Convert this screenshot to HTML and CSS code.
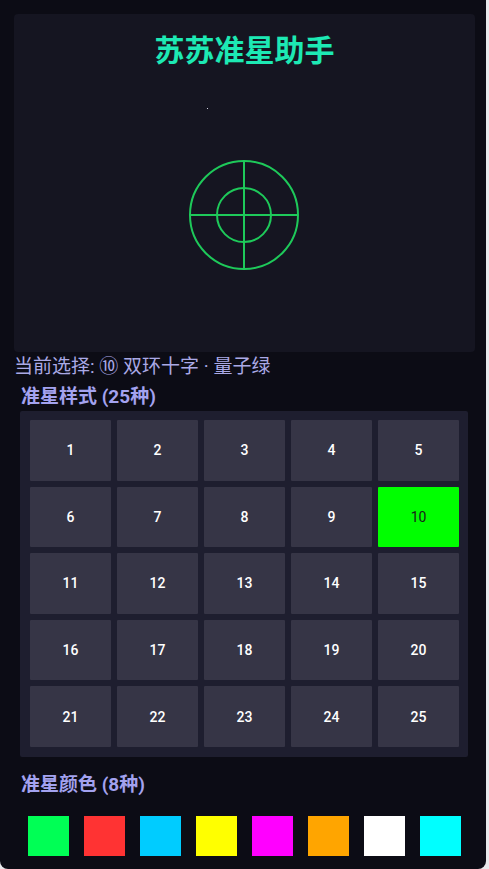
FILE: index.html
```html
<!DOCTYPE html>
<html lang="zh-CN">
<head>
<meta charset="utf-8">
<title>苏苏准星助手</title>
<link rel="stylesheet" href="styles.css">
</head>
<body>
<div class="app">
  <div class="preview">
    <h1 class="title">苏苏准星助手</h1>
    <span class="dot"></span>
    <div class="stage">
      <svg class="cross" width="112" height="112" viewBox="0 0 112 112">
        <g fill="none" stroke="#1ec95a" stroke-width="2">
          <circle cx="56" cy="56" r="54"/>
          <circle cx="56" cy="56" r="27"/>
          <line x1="2" y1="56" x2="110" y2="56"/>
          <line x1="56" y1="2" x2="56" y2="110"/>
        </g>
      </svg>
    </div>
  </div>
  <div class="current">当前选择: ⑩ 双环十字 · 量子绿</div>
  <div class="heading">准星样式 (25种)</div>
  <div class="grid">
    <div class="cell">1</div><div class="cell">2</div><div class="cell">3</div><div class="cell">4</div><div class="cell">5</div>
    <div class="cell">6</div><div class="cell">7</div><div class="cell">8</div><div class="cell">9</div><div class="cell selected">10</div>
    <div class="cell">11</div><div class="cell">12</div><div class="cell">13</div><div class="cell">14</div><div class="cell">15</div>
    <div class="cell">16</div><div class="cell">17</div><div class="cell">18</div><div class="cell">19</div><div class="cell">20</div>
    <div class="cell">21</div><div class="cell">22</div><div class="cell">23</div><div class="cell">24</div><div class="cell">25</div>
  </div>
  <div class="heading heading-colors">准星颜色 (8种)</div>
  <div class="swatches">
    <span class="swatch c1"></span>
    <span class="swatch c2"></span>
    <span class="swatch c3"></span>
    <span class="swatch c4"></span>
    <span class="swatch c5"></span>
    <span class="swatch c6"></span>
    <span class="swatch c7"></span>
    <span class="swatch c8"></span>
  </div>
</div>
</body>
</html>
```
FILE: styles.css
```css
html, body {
  margin: 0;
  padding: 0;
  background: #e9e9ec;
}
body {
  font-family: Roboto, "Noto Sans CJK SC", sans-serif;
}
.app {
  width: 486px;
  height: 869px;
  box-sizing: border-box;
  background: #0c0c15;
  border-radius: 0 0 8px 8px;
  padding: 14px 11px 0 14px;
  overflow: hidden;
}
.preview {
  position: relative;
  height: 338px;
  background: #151521;
  border-radius: 4px;
  display: flex;
  flex-direction: column;
  align-items: center;
}
.title {
  margin: 14px 0 0 0;
  font-family: "Noto Sans CJK SC", sans-serif;
  font-size: 30px;
  line-height: 40px;
  font-weight: 700;
  color: #1de9b4;
}
.dot {
  position: absolute;
  left: 193px;
  top: 94px;
  width: 1px;
  height: 1px;
  background: #cfcfdf;
}
.stage {
  margin-top: 91px;
  margin-right: 2px;
}
.cross {
  display: block;
}
.current {
  margin-top: 3px;
  font-family: Roboto, "Noto Sans CJK SC", sans-serif;
  font-size: 19px;
  line-height: 24px;
  color: #aaa9e6;
}
.heading {
  margin: 7px 0 0 7px;
  font-family: Roboto, "Noto Sans CJK SC", sans-serif;
  font-size: 19px;
  font-weight: 700;
  line-height: 22px;
  color: #a3a2ef;
}
.grid {
  margin: 3px 0 0 6px;
  width: 448px;
  box-sizing: border-box;
  background: #1e1e2f;
  padding: 9px 9px 10px 10px;
  display: grid;
  grid-template-columns: repeat(5, 81px);
  grid-template-rows: repeat(5, 1fr);
  gap: 6px;
  height: 346px;
  border-radius: 2px;
}
.cell {
  background: #363546;
  color: #ffffff;
  font-size: 14px;
  font-weight: 500;
  display: flex;
  align-items: center;
  justify-content: center;
  border-radius: 1px;
}
.cell.selected {
  background: #00ff00;
  color: #1a1a1a;
  font-weight: 400;
}
.heading-colors {
  margin-top: 17px;
}
.swatches {
  margin: 20px 0 0 14px;
  display: flex;
  gap: 15px;
}
.swatch {
  width: 41px;
  height: 40px;
  display: block;
}
.c1 { background: #00ff55; }
.c2 { background: #ff3333; }
.c3 { background: #00ccff; }
.c4 { background: #ffff00; }
.c5 { background: #ff00ff; }
.c6 { background: #ffa500; }
.c7 { background: #ffffff; }
.c8 { background: #00ffff; }
```
